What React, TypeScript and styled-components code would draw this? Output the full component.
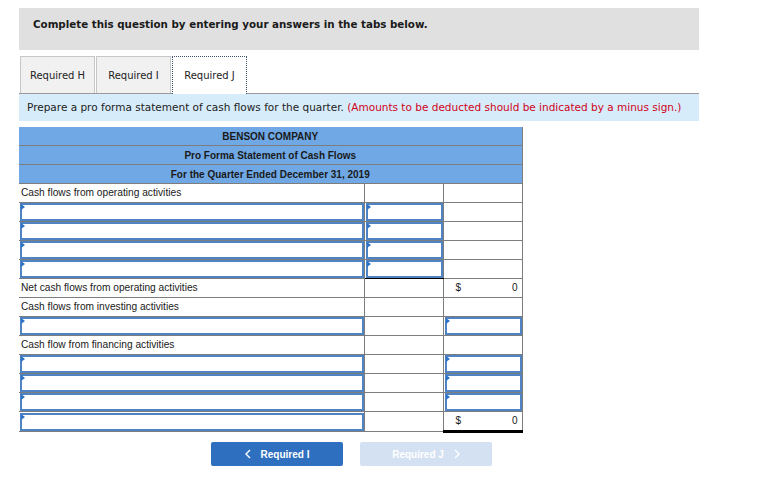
import React from "react";
import styled, { createGlobalStyle } from "styled-components";

const GlobalStyle = createGlobalStyle`
  body {
    margin: 0;
    background: #ffffff;
    font-family: "DejaVu Sans", Verdana, sans-serif;
    color: #222222;
  }
`;

type Col3 = "none" | "input" | "total" | "grand";

interface Row {
  label?: string;
  col1Input?: boolean;
  col2Input?: boolean;
  col2Underline?: boolean;
  col3: Col3;
}

const rows: Row[] = [
  { label: "Cash flows from operating activities", col3: "none" },
  { col1Input: true, col2Input: true, col3: "none" },
  { col1Input: true, col2Input: true, col3: "none" },
  { col1Input: true, col2Input: true, col3: "none" },
  { col1Input: true, col2Input: true, col2Underline: true, col3: "none" },
  { label: "Net cash flows from operating activities", col3: "total" },
  { label: "Cash flows from investing activities", col3: "none" },
  { col1Input: true, col3: "input" },
  { label: "Cash flow from financing activities", col3: "none" },
  { col1Input: true, col3: "input" },
  { col1Input: true, col3: "input" },
  { col1Input: true, col3: "input" },
  { col1Input: true, col3: "grand" },
];

const Page = styled.div`
  width: 680px;
  padding: 8px 0 0 19px;
`;

const Banner = styled.div`
  height: 42px;
  background: #e0e0e0;
  padding: 10px 0 0 14px;
  box-sizing: border-box;
  font-size: 10.3px;
  font-weight: bold;
  color: #1a1a1a;
`;

const TabBar = styled.div`
  display: flex;
  align-items: flex-end;
  gap: 1px;
  margin-top: 5px;
  height: 38px;
  border-bottom: 1px solid #9a9a9a;
  padding-left: 1px;
`;

const Tab = styled.div<{ $active?: boolean }>`
  width: 75px;
  height: ${(p) => (p.$active ? "38px" : "37px")};
  box-sizing: border-box;
  display: flex;
  align-items: center;
  justify-content: center;
  font-size: 10px;
  color: #222222;
  background: ${(p) => (p.$active ? "#ffffff" : "#f1f1f1")};
  border: ${(p) => (p.$active ? "1px dotted #3d4f6e" : "1px solid #c6c6c6")};
  border-bottom: none;
  margin-bottom: ${(p) => (p.$active ? "-1px" : "0")};
`;

const Instruction = styled.div`
  height: 27px;
  background: #d7ecfa;
  padding: 7px 0 0 8px;
  box-sizing: border-box;
  font-size: 10.5px;
  color: #222222;
  white-space: nowrap;
`;

const Red = styled.span`
  color: #d0021b;
`;

const Sheet = styled.table`
  margin-top: 6px;
  width: 503px;
  border-collapse: collapse;
  table-layout: fixed;
  font-family: "Liberation Sans", Arial, sans-serif;
  font-size: 10px;
  color: #1a1a1a;
`;

const HeadCell = styled.td`
  height: 18px;
  padding: 0;
  background: #6fa8e4;
  text-align: center;
  font-weight: bold;
  border-bottom: 1px solid #7d7d7d;
  border-right: 1px solid #7d7d7d;
`;

const Cell = styled.td<{ $first?: boolean; $last?: boolean; $bottom?: string }>`
  height: 18px;
  padding: 0;
  position: relative;
  border-bottom: ${(p) => p.$bottom ?? "1px solid #7d7d7d"};
  border-left: ${(p) => (p.$first ? "none" : "1px solid #7d7d7d")};
  border-right: ${(p) => (p.$last ? "1px solid #7d7d7d" : "none")};
`;

const Label = styled.div`
  padding-left: 2px;
  line-height: 18px;
  font-size: 10.2px;
  white-space: nowrap;
`;

const Field = styled.div`
  position: relative;
  height: 18px;
  box-sizing: border-box;
  border: 2px solid #4f84c4;
  margin-left: 1px;
  background: #ffffff;

  &::before {
    content: "";
    position: absolute;
    left: -1px;
    top: -1px;
    border-top: 3px solid transparent;
    border-bottom: 3px solid transparent;
    border-left: 4px solid #2d72c8;
  }
`;

const Amount = styled.div`
  display: flex;
  justify-content: space-between;
  padding: 0 4px 0 12px;
  line-height: 18px;
`;

const Nav = styled.div`
  display: flex;
  gap: 17px;
  margin: 9px 0 0 192px;
`;

const NavButton = styled.button<{ $disabled?: boolean }>`
  width: 132px;
  height: 24px;
  border: none;
  border-radius: 2px;
  display: flex;
  align-items: center;
  justify-content: center;
  gap: 10px;
  font-family: "Liberation Sans", Arial, sans-serif;
  font-size: 10px;
  font-weight: bold;
  color: #ffffff;
  background: ${(p) => (p.$disabled ? "#d4e1f2" : "#2e6fbf")};
  cursor: ${(p) => (p.$disabled ? "default" : "pointer")};
`;

const Chevron = ({ dir }: { dir: "left" | "right" }) => (
  <svg width="6" height="10" viewBox="0 0 6 10" fill="none">
    <path
      d={dir === "left" ? "M5 1L1 5l4 4" : "M1 1l4 4-4 4"}
      stroke="#ffffff"
      strokeWidth="1.4"
    />
  </svg>
);

const App: React.FC = () => {
  return (
    <>
      <GlobalStyle />
      <Page>
        <Banner>Complete this question by entering your answers in the tabs below.</Banner>
        <TabBar>
          <Tab>Required H</Tab>
          <Tab>Required I</Tab>
          <Tab $active>Required J</Tab>
        </TabBar>
        <Instruction>
          Prepare a pro forma statement of cash flows for the quarter.{" "}
          <Red>(Amounts to be deducted should be indicated by a minus sign.)</Red>
        </Instruction>
        <Sheet>
          <colgroup>
            <col style={{ width: 345 }} />
            <col style={{ width: 79 }} />
            <col style={{ width: 79 }} />
          </colgroup>
          <tbody>
            <tr>
              <HeadCell colSpan={3}>BENSON COMPANY</HeadCell>
            </tr>
            <tr>
              <HeadCell colSpan={3}>Pro Forma Statement of Cash Flows</HeadCell>
            </tr>
            <tr>
              <HeadCell colSpan={3}>For the Quarter Ended December 31, 2019</HeadCell>
            </tr>
            {rows.map((r, i) => (
              <tr key={i}>
                <Cell $first>{r.col1Input ? <Field /> : <Label>{r.label}</Label>}</Cell>
                <Cell $bottom={r.col2Underline ? "1px solid #000000" : undefined}>
                  {r.col2Input && <Field />}
                </Cell>
                <Cell $last $bottom={r.col3 === "grand" ? "3px solid #000000" : undefined}>
                  {r.col3 === "input" && <Field />}
                  {(r.col3 === "total" || r.col3 === "grand") && (
                    <Amount>
                      <span>$</span>
                      <span>0</span>
                    </Amount>
                  )}
                </Cell>
              </tr>
            ))}
          </tbody>
        </Sheet>
        <Nav>
          <NavButton>
            <Chevron dir="left" />
            Required I
          </NavButton>
          <NavButton $disabled>
            Required J
            <Chevron dir="right" />
          </NavButton>
        </Nav>
      </Page>
    </>
  );
};

export default App;
